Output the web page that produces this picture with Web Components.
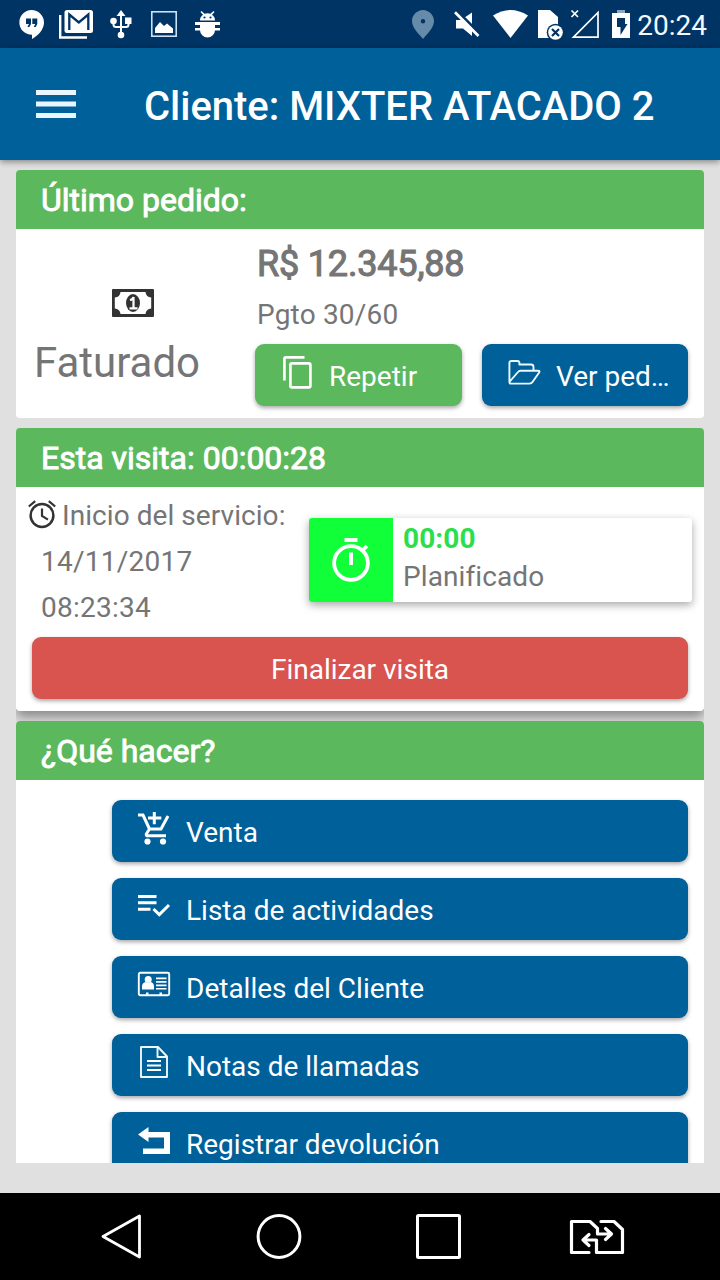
<!DOCTYPE html>
<html lang="es">
<head>
<meta charset="utf-8">
<title>Cliente</title>
<style>
html,body{margin:0;padding:0;height:100%;overflow:hidden}
body{font-family:Roboto,"Liberation Sans",sans-serif;background:#e0e0e0}
</style>
</head>
<body>
<client-screen></client-screen>
<script>
const define = (name, html, setup) => {
  const template = document.createElement('template');
  template.innerHTML = html;
  customElements.define(name, class extends HTMLElement {
    constructor() {
      super();
      this.attachShadow({mode: 'open'}).append(template.content.cloneNode(true));
    }
    connectedCallback() { if (setup) setup(this, this.shadowRoot); }
  });
};

// name: [width, height, svg content]
const ICONS = {
  hangouts: [25, 30, '<path fill="#fff" fill-rule="evenodd" d="M12.500 0a12.500 12.500 0 0 1 12.500 12.500c0 6.500-5.500 13-12 16.500v-4.200A12.300 12.300 0 0 1 12.500 0zM7 8.500v5.500h3l-1.600 3h2l1.600-3V8.500zM13.300 8.500v5.500h3l-1.600 3h2l1.600-3V8.500z"/>'],
  gmail: [34, 29, '<path fill="none" stroke="#fff" stroke-width="2.400" d="M1.200 5v22.500H28"/><rect x="5.500" width="28.500" height="23" rx="2.500" fill="#fff"/><path fill="none" stroke="#003464" stroke-width="2.300" d="M10.300 20V4.500l9.500 8 9.500-8V20"/>'],
  usb: [22, 29, '<path fill="none" stroke="#fff" stroke-width="2" d="M11 26V3M3.500 11v3.500q0 2.500 2.500 2.500h10q2.500 0 2.500-2.500V10"/><path fill="#fff" d="M6.500 6L11 0l4.500 6zM15 7.500h6.500V14H15z"/><circle cx="3.500" cy="11" r="3.300" fill="#fff"/><circle cx="11" cy="25" r="3.300" fill="#fff"/>'],
  picture: [26, 26, '<rect x=".8" y=".8" width="24.400" height="24.400" fill="none" stroke="#d7ecff" stroke-width="1.500"/><path fill="#fff" d="M4 22v-5l5-6 4 4 3-2.500 6 5V22z"/>'],
  bug: [25, 27, '<path fill="#fff" d="M5 9.500a7.500 7 0 0 1 3-5.700L5.500 1.100l1-1 3 2.700a8 8 0 0 1 6 0l3-2.700 1 1L17 3.800a7.500 7 0 0 1 3 5.700zM5 11h15v8a7.500 7.500 0 0 1-15 0z"/><path fill="#fff" d="M0 11h25v3H0zM0 17h25v2.500H0z"/><circle cx="9.500" cy="6.500" r="1.100" fill="#003464"/><circle cx="15.500" cy="6.500" r="1.100" fill="#003464"/>'],
  pin: [22, 29, '<path fill="#668aaa" fill-rule="evenodd" d="M11 0c6 0 11 5 11 11 0 7-7 13-11 18C7 24 0 18 0 11 0 5 5 0 11 0zm0 9a2.200 2.200 0 1 0 0 4.400A2.200 2.200 0 0 0 11 9z"/>'],
  mute: [26, 26, '<path fill="#fff" d="M2 9h5L18 1.500V25L9 17.500H2z"/><path d="M2 -1L27 24" stroke="#003464" stroke-width="3"/><path d="M1 1.200L24.500 25" stroke="#fff" stroke-width="2.700"/>'],
  wifi: [35, 28, '<path fill="#fff" d="M0 5.500Q17.500-5.500 35 5.500L17.500 28z"/>'],
  sim: [25, 31, '<path fill="#fff" d="M0 0h12l8 7v21H0z"/><circle cx="17.500" cy="22.500" r="8.800" fill="#003464"/><circle cx="17.500" cy="22.500" r="7.300" fill="#fff"/><path stroke="#003464" stroke-width="2.200" d="M14 19l7 7m0-7l-7 7"/>'],
  signal: [28, 29, '<path fill="none" stroke="#fff" stroke-width="1.700" d="M27 2.500v24.700H2.500z"/><path stroke="#fff" stroke-width="1.700" d="M.5 .5l6.500 6.500m0-6.500l-6.500 6.500"/>'],
  battery: [18, 28, '<path fill="#8ea7bf" d="M5 0h8v4H5z"/><path fill="#fff" d="M0 3h18v25H0z"/><path fill="#003464" d="M5 8h8v6h2.500L8.500 25v-8H5z"/>'],
  menu: [40, 28, '<path fill="#eaf6ff" d="M0 0h40v5H0zM0 11.500h40v5H0zM0 23h40v5H0z"/>'],
  money: [42, 28, '<path fill="#333" fill-rule="evenodd" d="M1 0h40q1 0 1 1v26q0 1-1 1H1q-1 0-1-1V1q0-1 1-1zM8.500 3Q8 8 2.800 8.500v11Q8 20 8.500 25h25q.5-5 5.700-5.500v-11Q34 8 33.500 3z"/><ellipse cx="21" cy="14" rx="7" ry="9" fill="#333"/><path fill="none" stroke="#fff" stroke-width="2.200" d="M18 11q3-.5 3.500-3v11M17.500 19.300h8"/>'],
  copy: [29, 33, '<path fill="none" stroke="#fff" stroke-width="2.700" d="M1.400 24.500V3q0-1.600 1.600-1.600h18.500"/><rect x="7.400" y="7.400" width="20" height="24" rx="1.600" fill="none" stroke="#fff" stroke-width="2.700"/>'],
  folder: [33, 25, '<path fill="none" stroke="#eef8ff" stroke-width="1.900" stroke-linejoin="round" d="M1.400 22V3q0-2 2-2h6q2 0 2 2v1.500H23q2.500 0 2.500 2.500v3.500M1.400 22L10 12q1-1.300 2.500-1.300H30q2.500 0 1 2L24.500 22q-1 1.600-3 1.600H3q-1.600 0-1.600-1.600z"/>'],
  alarm: [28, 28, '<circle cx="14" cy="15.500" r="11.400" fill="none" stroke="#333" stroke-width="2.500"/><path fill="none" stroke="#333" stroke-width="2.200" d="M14 8.500V16l6 3.600M.8 6.500l6.400-5.300M27.200 6.500l-6.400-5.300"/>'],
  timer: [38, 44, '<circle cx="19" cy="25" r="16.900" fill="none" stroke="#fff" stroke-width="3.800"/><path fill="#fff" d="M12.500 0h13v4h-13zM17 14.500h4V27h-4z"/><path stroke="#fff" stroke-width="3.500" d="M30 13l5-5"/>'],
  cart: [32, 33, '<path fill="none" stroke="#fff" stroke-width="3" d="M0 3h5l6.500 14L8.300 22q-.5 1.800 1.700 1.800h18M11.500 17h11.500L30 4"/><path fill="#fff" d="M14.800 0h3v4.600h5.500v3h-5.500v4.600h-3V7.600H10v-3h4.800z"/><circle cx="9.500" cy="29.500" r="3.100" fill="#fff"/><circle cx="25" cy="29.500" r="3.100" fill="#fff"/>'],
  tasks: [32, 22, '<path fill="#fff" d="M0 0h18.500v3H0zM0 6.200h18.500v3H0zM0 12.800h12.500v3H0z"/><path fill="none" stroke="#fff" stroke-width="3" d="M15.500 14l5.800 5.600L31 10"/>'],
  card: [32, 24, '<rect x=".8" y=".8" width="30.400" height="22.400" rx="1.500" fill="none" stroke="#fff" stroke-width="1.900"/><circle cx="10.200" cy="7.500" r="3.500" fill="#fff"/><path fill="#fff" d="M4 17.500v-3q0-4 4-4.500 2 2 4.500 0 3.500.5 3.500 4.500v3zM18 5.500h10.500v1.800H18zM18 9h10.500v1.800H18zM18 12.500h10.500v1.800H18zM18 16h10.500v1.500H18zM8 20.500h2.500V23H8zM21.500 20.500H24V23h-2.500z"/>'],
  note: [28, 32, '<path fill="none" stroke="#eef8ff" stroke-width="1.900" stroke-linejoin="round" d="M1 1h17l9 9.500V31H1zM17.500 1v10H27"/><path fill="#fff" d="M7 14h14v2H7zM7 18.500h14v2H7zM7 23h14v2H7z"/>'],
  back: [32, 27, '<path fill="#fff" d="M0 7.500L10.500 0v5H32v22H5v-5.500h21v-11H10.500V15z"/>'],
  navBack: [42, 48, '<path fill="none" stroke="#fff" stroke-width="2.800" stroke-linejoin="round" d="M3 23.500L39.500 3v41z"/>'],
  navHome: [46, 48, '<circle cx="23" cy="23.500" r="20.900" fill="none" stroke="#fff" stroke-width="3"/>'],
  navRecent: [46, 48, '<rect x="2.500" y="2.500" width="42" height="42" rx="1" fill="none" stroke="#fff" stroke-width="3"/>'],
  navSim: [56, 36, '<path fill="none" stroke="#fff" stroke-width="3.200" stroke-linejoin="round" stroke-linecap="round" d="M20 33.500H2.500v-31H21l7.500 7v5.500H42M36.500 9.500L42.500 15l-6 5.500M32 2.500h13l8.500 8v23H27.500V21H14M20 15.500L14 21l6 5.500"/>']
};

define('ui-icon', `<style>:host{display:block;flex:none}svg{display:block;overflow:visible}</style><svg xmlns="http://www.w3.org/2000/svg"></svg>`, (el, root) => {
  const [w, h, body] = ICONS[el.getAttribute('name')];
  const svg = root.querySelector('svg');
  svg.setAttribute('width', w);
  svg.setAttribute('height', h);
  svg.setAttribute('viewBox', `0 0 ${w} ${h}`);
  svg.innerHTML = body;
});

define('status-bar', `<style>
:host{display:flex;height:48px;box-sizing:border-box;align-items:center;justify-content:space-between;padding:0 13px 0 19px;background:#003464;color:#f2faff}
div{display:flex;align-items:center}
.left ui-icon+ui-icon{margin-left:16px}
span{font-size:28px;line-height:46px;padding-top:4px;margin-left:7px}
</style>
<div class="left"><ui-icon name="hangouts" style="margin-top:1px"></ui-icon><ui-icon name="gmail" style="margin-left:15px"></ui-icon><ui-icon name="usb" style="margin-left:17px"></ui-icon><ui-icon name="picture" style="margin-left:19px"></ui-icon><ui-icon name="bug" style="margin-left:18px"></ui-icon></div>
<div><ui-icon name="pin"></ui-icon><ui-icon name="mute" style="margin:0 13px 0 20px"></ui-icon><ui-icon name="wifi"></ui-icon><ui-icon name="sim" style="margin:2px 8px 0 10px"></ui-icon><ui-icon name="signal"></ui-icon><ui-icon name="battery" style="margin-left:13px"></ui-icon><span>20:24</span></div>`);

define('app-bar', `<style>
:host{display:flex;align-items:center;height:112px;box-sizing:border-box;padding-left:36px;background:#00609a;color:#fff;box-shadow:0 2px 6px rgba(0,0,0,.4);position:relative;z-index:1}
h1{margin:0 0 0 68px;padding-top:6px;font-size:40px;font-weight:500;line-height:48px;white-space:nowrap;letter-spacing:-.03px}
</style><ui-icon name="menu"></ui-icon><h1><slot></slot></h1>`);

define('info-card', `<style>
:host{display:block;flex:none;background:#fff;border-radius:4px}
h2{margin:0;height:59px;box-sizing:border-box;padding:1px 24px 0 25px;font-size:32px;font-weight:400;line-height:58px;color:#fff;background:#5cb85c;border-radius:4px 4px 0 0;-webkit-text-stroke:.9px #fff;white-space:nowrap}
</style><h2><slot name="title"></slot></h2><slot></slot>`);

define('action-button', `<style>
:host{display:flex;height:62px;box-sizing:border-box;padding:0 18px 0 26px;border-radius:9px;background:#00609a;color:#fff;font-size:28px;box-shadow:0 2px 4px rgba(0,0,0,.35);overflow:hidden;align-items:center}
:host([tone=green]){background:#5cb85c}
:host([tone=red]){background:#d9534f;justify-content:center;padding:0 26px}
:host([tone=red]) i{display:none}
i{display:flex;flex:none;width:32px;height:50px;align-items:center;justify-content:center;margin-right:16px;margin-top:-6px}
b{font-weight:400;line-height:60px;padding-top:3px;white-space:nowrap}
</style><i><slot name="icon"></slot></i><b><slot></slot></b>`);

define('last-order', `<style>
:host{display:grid;grid-template-columns:202px 1fr;column-gap:37px;height:189px;box-sizing:border-box;padding-right:16px;color:#757575}
.state{display:flex;flex-direction:column;align-items:center;padding-top:60px}
.state ui-icon{margin-left:32px}
.state span{font-size:42px;line-height:50px;margin-top:21px}
.price{font-size:36px;line-height:42px;padding:14px 0 0 2px;-webkit-text-stroke:1.100px #757575;letter-spacing:-.18px}
.terms{font-size:28px;line-height:34px;padding:13px 0 0 2px;letter-spacing:.18px}
.row{display:grid;grid-template-columns:207px 206px;column-gap:20px;margin-top:12px}
</style>
<div class="state"><ui-icon name="money"></ui-icon><span>Faturado</span></div>
<div><div class="price">R$ 12.345,88</div><div class="terms">Pgto 30/60</div>
<div class="row"><action-button tone="green"><ui-icon slot="icon" name="copy"></ui-icon>Repetir</action-button><action-button><ui-icon slot="icon" name="folder"></ui-icon>Ver ped…</action-button></div></div>`);

define('timer-tile', `<style>
:host{display:flex;width:383px;height:84px;border-radius:3px;background:#fff;box-shadow:0 3px 8px rgba(0,0,0,.35);font-size:28px;line-height:38px;overflow:hidden}
.icon{display:flex;width:84px;align-items:center;justify-content:center;background:#10ff38}
.text{padding:2px 10px;letter-spacing:.1px}
b{display:block;color:#2adf4b;font-weight:700}
</style><div class="icon"><ui-icon name="timer"></ui-icon></div><div class="text"><b>00:00</b>Planificado</div>`);

define('current-visit', `<style>
:host{display:block;height:224px;box-sizing:border-box;padding:6px 16px 0;color:#757575;font-size:28px;line-height:46px}
.top{display:flex;height:144px}
.when{width:277px;white-space:nowrap}
.start{display:flex;margin-left:-4px;align-items:center;letter-spacing:.06px}
.start ui-icon{margin:-4px 6px 0 0}
.d{padding-left:9px;letter-spacing:.25px}
timer-tile{flex:none;margin-top:25px}
</style>
<div class="top"><div class="when"><div class="start"><ui-icon name="alarm"></ui-icon>Inicio del servicio:</div><div class="d">14/11/2017</div><div class="d">08:23:34</div></div><timer-tile></timer-tile></div>
<action-button tone="red">Finalizar visita</action-button>
<style>.when{flex:0 0 277px}.top{margin-right:-4px}timer-tile{margin-left:0}</style>`);

define('action-list', `<style>:host{display:flex;flex-direction:column;gap:16px;padding:20px 16px 16px 96px}</style><slot></slot>`);

define('nav-bar', `<style>
:host{display:flex;align-items:center;height:87px;background:#000;box-sizing:border-box;padding-left:100px}
</style><ui-icon name="navBack"></ui-icon><ui-icon name="navHome" style="margin-left:114px"></ui-icon><ui-icon name="navRecent" style="margin-left:113px"></ui-icon><ui-icon name="navSim" style="margin-left:108px"></ui-icon>`);

define('client-screen', `<style>
:host{display:flex;flex-direction:column;width:720px;height:1280px;background:#e0e0e0}
main{flex:1;min-height:0;display:flex;flex-direction:column;gap:10px;margin:0 16px 30px;padding-top:10px;overflow:hidden}
.raised{box-shadow:0 6px 12px rgba(0,0,0,.4);clip-path:inset(0 0 -10px 0)}
</style>
<status-bar></status-bar>
<app-bar>Cliente: MIXTER ATACADO 2</app-bar>
<main>
<info-card><span slot="title">Último pedido:</span><last-order></last-order></info-card>
<info-card class="raised"><span slot="title">Esta visita: 00:00:28</span><current-visit></current-visit></info-card>
<info-card><span slot="title">¿Qué hacer?</span><action-list>
<action-button><ui-icon slot="icon" name="cart"></ui-icon>Venta</action-button>
<action-button><ui-icon slot="icon" name="tasks"></ui-icon>Lista de actividades</action-button>
<action-button><ui-icon slot="icon" name="card"></ui-icon>Detalles del Cliente</action-button>
<action-button><ui-icon slot="icon" name="note"></ui-icon>Notas de llamadas</action-button>
<action-button><ui-icon slot="icon" name="back"></ui-icon>Registrar devolución</action-button>
</action-list></info-card>
</main>
<nav-bar></nav-bar>`);
</script>
</body>
</html>
